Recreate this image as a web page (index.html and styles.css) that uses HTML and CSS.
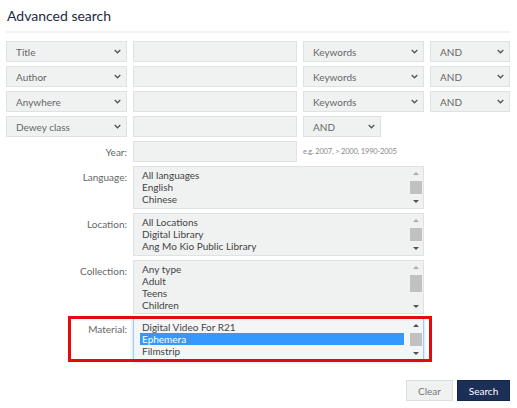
FILE: index.html
```html
<!DOCTYPE html>
<html lang="en">
<head>
<meta charset="utf-8">
<title>Advanced search</title>
<link rel="stylesheet" href="styles.css">
</head>
<body>
<div class="page">
  <h1 class="title">Advanced search</h1>
  <div class="rule"></div>
  <div class="form">
    <div class="control select"><span>Title</span><svg class="chev" width="7" height="5" viewBox="0 0 7 5"><path d="M0.7 1 L3.5 3.8 L6.3 1" fill="none" stroke="#555" stroke-width="1.3"/></svg></div>
    <div class="control input"></div>
    <div class="control select"><span>Keywords</span><svg class="chev" width="7" height="5" viewBox="0 0 7 5"><path d="M0.7 1 L3.5 3.8 L6.3 1" fill="none" stroke="#555" stroke-width="1.3"/></svg></div>
    <div class="control select"><span>AND</span><svg class="chev" width="7" height="5" viewBox="0 0 7 5"><path d="M0.7 1 L3.5 3.8 L6.3 1" fill="none" stroke="#555" stroke-width="1.3"/></svg></div>

    <div class="control select"><span>Author</span><svg class="chev" width="7" height="5" viewBox="0 0 7 5"><path d="M0.7 1 L3.5 3.8 L6.3 1" fill="none" stroke="#555" stroke-width="1.3"/></svg></div>
    <div class="control input"></div>
    <div class="control select"><span>Keywords</span><svg class="chev" width="7" height="5" viewBox="0 0 7 5"><path d="M0.7 1 L3.5 3.8 L6.3 1" fill="none" stroke="#555" stroke-width="1.3"/></svg></div>
    <div class="control select"><span>AND</span><svg class="chev" width="7" height="5" viewBox="0 0 7 5"><path d="M0.7 1 L3.5 3.8 L6.3 1" fill="none" stroke="#555" stroke-width="1.3"/></svg></div>

    <div class="control select"><span>Anywhere</span><svg class="chev" width="7" height="5" viewBox="0 0 7 5"><path d="M0.7 1 L3.5 3.8 L6.3 1" fill="none" stroke="#555" stroke-width="1.3"/></svg></div>
    <div class="control input"></div>
    <div class="control select"><span>Keywords</span><svg class="chev" width="7" height="5" viewBox="0 0 7 5"><path d="M0.7 1 L3.5 3.8 L6.3 1" fill="none" stroke="#555" stroke-width="1.3"/></svg></div>
    <div class="control select"><span>AND</span><svg class="chev" width="7" height="5" viewBox="0 0 7 5"><path d="M0.7 1 L3.5 3.8 L6.3 1" fill="none" stroke="#555" stroke-width="1.3"/></svg></div>

    <div class="control select"><span>Dewey class</span><svg class="chev" width="7" height="5" viewBox="0 0 7 5"><path d="M0.7 1 L3.5 3.8 L6.3 1" fill="none" stroke="#555" stroke-width="1.3"/></svg></div>
    <div class="control input"></div>
    <div class="control select select-short"><span>AND</span><svg class="chev" width="7" height="5" viewBox="0 0 7 5"><path d="M0.7 1 L3.5 3.8 L6.3 1" fill="none" stroke="#555" stroke-width="1.3"/></svg></div>

    <div class="label label-mid">Year:</div>
    <div class="control input"></div>
    <div class="hint">e.g. 2007, &gt; 2000, 1990-2005</div>

    <div class="label label-top">Language:</div>
    <div class="listbox">
      <div class="items">
        <div class="item">All languages</div>
        <div class="item">English</div>
        <div class="item">Chinese</div>
        <div class="item">Malay</div>
      </div>
      <div class="scrollbar">
        <div class="arrow arrow-up"></div>
        <div class="track"><div class="thumb"></div></div>
        <div class="arrow arrow-down"></div>
      </div>
    </div>

    <div class="label label-top">Location:</div>
    <div class="listbox">
      <div class="items">
        <div class="item">All Locations</div>
        <div class="item">Digital Library</div>
        <div class="item">Ang Mo Kio Public Library</div>
        <div class="item">Bedok Public Library</div>
      </div>
      <div class="scrollbar">
        <div class="arrow arrow-up"></div>
        <div class="track"><div class="thumb"></div></div>
        <div class="arrow arrow-down"></div>
      </div>
    </div>

    <div class="label label-top">Collection:</div>
    <div class="listbox listbox-tall">
      <div class="items">
        <div class="item">Any type</div>
        <div class="item">Adult</div>
        <div class="item">Teens</div>
        <div class="item">Children</div>
      </div>
      <div class="scrollbar">
        <div class="arrow arrow-up"></div>
        <div class="track"><div class="thumb thumb-tall"></div></div>
        <div class="arrow arrow-down"></div>
      </div>
    </div>

    <div class="label label-top">Material:</div>
    <div class="listbox listbox-focus">
      <div class="items">
        <div class="item">Digital Video For R21</div>
        <div class="item item-selected">Ephemera</div>
        <div class="item">Filmstrip</div>
        <div class="item">Game</div>
      </div>
      <div class="scrollbar">
        <div class="arrow arrow-up arrow-active"></div>
        <div class="track"><div class="thumb"></div></div>
        <div class="arrow arrow-down"></div>
      </div>
      <div class="annotation"></div>
    </div>
  </div>
  <div class="actions">
    <button class="btn btn-clear" type="button">Clear</button>
    <button class="btn btn-search" type="button">Search</button>
  </div>
</div>
</body>
</html>
```

FILE: styles.css
```css
html, body {
  margin: 0;
  padding: 0;
  background: #ffffff;
}

body {
  font-family: Lato, "Noto Sans", sans-serif;
  font-size: 10px;
  color: #555;
}

.page {
  width: 504px;
  padding: 6px 0 0 6px;
}

.title {
  margin: 0;
  padding-left: 1px;
  font-size: 14px;
  font-weight: 400;
  line-height: 20px;
  color: #1c2a43;
}

.rule {
  height: 2px;
  background: #f1f2f2;
  margin: 5px 0 8px;
}

.form {
  display: grid;
  grid-template-columns: 121px 164px 121px 80px;
  column-gap: 6px;
  row-gap: 4px;
}

.control {
  box-sizing: border-box;
  height: 21px;
  border: 1px solid #dfe2e2;
  background: #f0f2f2;
}

.select {
  display: flex;
  align-items: center;
  justify-content: space-between;
  padding: 0 5px 0 9px;
  color: #666;
}

.chev {
  display: block;
}

.select-short {
  width: 78px;
}

.label {
  grid-column: 1;
  text-align: right;
  color: #666;
  line-height: 12px;
}

.label-mid {
  align-self: center;
}

.label-top {
  padding-top: 5px;
}

.hint {
  grid-column: 3 / 5;
  align-self: center;
  font-size: 7.5px;
  letter-spacing: -0.2px;
  color: #888;
}

.listbox {
  grid-column: 2 / 4;
  box-sizing: border-box;
  display: flex;
  height: 43px;
  border: 1px solid #dfe2e2;
  background: #f0f2f2;
}

.listbox-tall {
  height: 54px;
}

.listbox-focus {
  position: relative;
  border-color: #a9c9ee;
  background: #f3f5f7;
  box-shadow: 0 1px 3px rgba(80, 150, 230, 0.45);
}

.items {
  flex: 1;
  overflow: hidden;
  padding: 2px 6px 0 6px;
  line-height: 12px;
  color: #444;
}

.item {
  padding: 0 2px;
  white-space: nowrap;
}

.item-selected {
  background: #3399ff;
  color: #fff;
}

.scrollbar {
  width: 13px;
  display: flex;
  flex-direction: column;
}

.arrow {
  height: 13px;
  display: flex;
  align-items: center;
  justify-content: center;
  padding-right: 1px;
}

.arrow::before {
  content: "";
  width: 0;
  height: 0;
  border-left: 3px solid transparent;
  border-right: 3px solid transparent;
}

.arrow-up::before {
  border-bottom: 3px solid #ababab;
}

.arrow-active::before {
  border-bottom-color: #505050;
}

.arrow-down::before {
  border-top: 3px solid #505050;
}

.track {
  flex: 1;
}

.thumb {
  height: 13px;
  margin: 1px 1px 0 0;
  background: #c1c1c1;
}

.thumb-tall {
  height: 17px;
}

.annotation {
  position: absolute;
  left: -66px;
  top: -3px;
  width: 358px;
  height: 40px;
  border: 3px solid #e4090f;
}

.actions {
  display: flex;
  justify-content: flex-end;
  gap: 4px;
  margin-top: 19px;
}

.btn {
  box-sizing: border-box;
  height: 21px;
  padding: 0;
  font-family: Lato, "Noto Sans", sans-serif;
  font-size: 10px;
  cursor: pointer;
}

.btn-clear {
  width: 47px;
  border: 1px solid #dcdfdf;
  background: #f0f2f2;
  color: #777;
}

.btn-search {
  width: 53px;
  border: 1px solid #14264a;
  background: #1b2f57;
  color: #fff;
}
```
